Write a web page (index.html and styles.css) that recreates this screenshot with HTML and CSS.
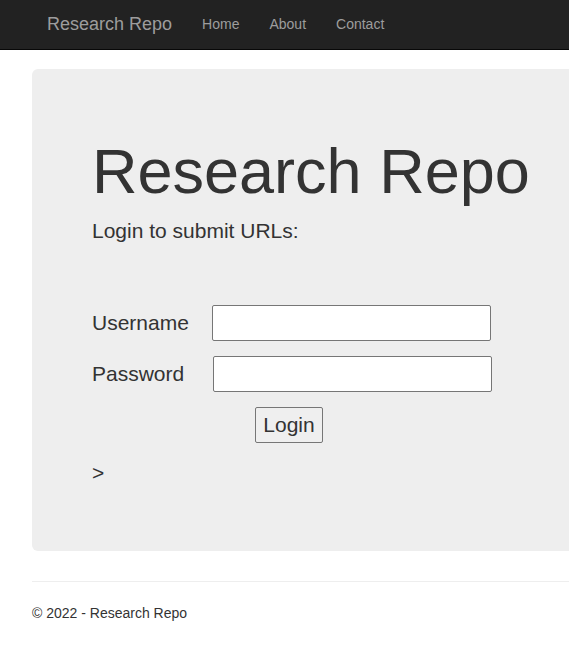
FILE: index.html
```html
<!DOCTYPE html>
<html lang="en">
<head>
<meta charset="utf-8">
<title>Research Repo</title>
<link rel="stylesheet" href="styles.css">
</head>
<body>
<nav class="navbar">
  <div class="navbar-inner">
    <a class="brand" href="#">Research Repo</a>
    <ul class="nav">
      <li><a href="#">Home</a></li>
      <li><a href="#">About</a></li>
      <li><a href="#">Contact</a></li>
    </ul>
  </div>
</nav>
<div class="container">
  <div class="jumbotron">
    <h1>Research Repo</h1>
    <p class="lead">Login to submit URLs:</p>
    <form class="login-form">
      <div class="row">
        <label class="label" for="u">Username</label>
        <input class="field" id="u" type="text">
      </div>
      <div class="row">
        <label class="label" for="p">Password</label>
        <input class="field field-pw" id="p" type="password">
      </div>
      <div class="row">
        <span class="label"></span>
        <button class="btn" type="button">Login</button>
      </div>
    </form>
    <p class="arrow">&gt;</p>
  </div>
  <hr class="rule">
  <footer class="footer">
    <p>© 2022 - Research Repo</p>
  </footer>
</div>
</body>
</html>
```
FILE: styles.css
```css
html, body {
  margin: 0;
  padding: 0;
}
body {
  font-family: "Liberation Sans", Arial, sans-serif;
  font-size: 14px;
  line-height: 1.42857;
  color: #333;
  background: #fff;
  overflow-x: hidden;
}
.navbar {
  height: 49px;
  background: #222;
  border-bottom: 1px solid #080808;
}
.navbar-inner {
  display: flex;
  align-items: center;
  height: 47px;
  padding-left: 32px;
}
.brand {
  font-size: 18px;
  line-height: 20px;
  padding: 13px 15px;
  color: #9d9d9d;
  text-decoration: none;
}
.nav {
  display: flex;
  list-style: none;
  margin: 0;
  padding: 0;
}
.nav a {
  display: block;
  padding: 13px 15px;
  line-height: 20px;
  font-size: 14px;
  color: #9d9d9d;
  text-decoration: none;
}
.container {
  width: 750px;
  margin-left: 32px;
}
.jumbotron {
  margin-top: 19px;
  background: #eee;
  border-radius: 6px;
  padding: 48px 60px;
  font-size: 21px;
}
.jumbotron h1 {
  font-size: 63px;
  font-weight: 500;
  line-height: 1.1;
  margin: 20px 0 10px;
}
.lead {
  margin: 0 0 59px;
  font-size: 21px;
  line-height: 30px;
}
.login-form {
  display: flex;
  flex-direction: column;
  gap: 15px;
}
.row {
  display: flex;
  align-items: center;
}
.label {
  width: 120px;
  font-size: 21px;
  line-height: 30px;
}
.field {
  width: 279px;
  height: 36px;
  box-sizing: border-box;
  border: 1px solid #767676;
  border-radius: 2px;
  background: #fff;
  font-size: 21px;
  padding: 1px 2px;
}
.field-pw {
  margin-left: 1px;
}
.btn {
  margin-left: 43px;
  height: 36px;
  width: 68px;
  box-sizing: border-box;
  font-family: "Liberation Sans", Arial, sans-serif;
  font-size: 21px;
  color: #333;
  background: #efefef;
  border: 1px solid #767676;
  border-radius: 2px;
  padding: 0;
}
.arrow {
  margin: 15px 0 15px;
  line-height: 30px;
}
.rule {
  margin: 30px 0 21px;
  border: 0;
  border-top: 1px solid #eee;
}
.footer p {
  margin: 0 0 10px;
  line-height: 20px;
}
```
